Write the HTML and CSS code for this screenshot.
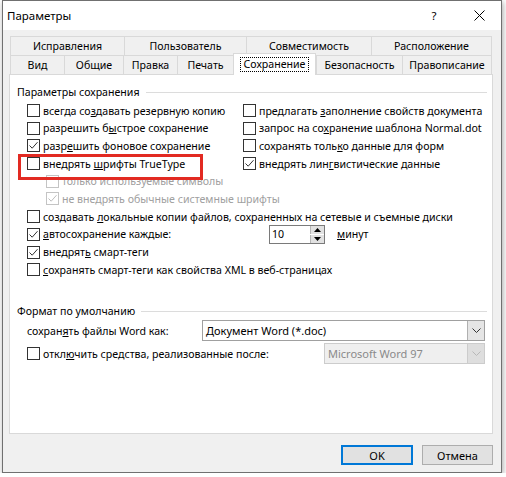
FILE: index.html
```html
<!DOCTYPE html>
<html lang="ru">
<head>
  <meta charset="UTF-8">
  <title>Параметры</title>
  <link rel="stylesheet" href="styles.css">
</head>
<body>
  <div class="dialog">
    <div class="titlebar">
      <span class="title">Параметры</span>
      <span class="help">?</span>
      <span class="close">
        <svg width="11" height="11" viewBox="0 0 11 11"><path d="M0.5 0.5 L10.5 10.5 M10.5 0.5 L0.5 10.5"/></svg>
      </span>
    </div>

    <div class="body">
      <div class="tabs">
        <div class="tab-row row-top">
          <div class="tab">Исправления</div>
          <div class="tab">Пользователь</div>
          <div class="tab">Совместимость</div>
          <div class="tab">Расположение</div>
        </div>
        <div class="tab-row row-bottom">
          <div class="tab">Вид</div>
          <div class="tab">Общие</div>
          <div class="tab">Правка</div>
          <div class="tab">Печать</div>
          <div class="tab active"><span class="focus">Сохранение</span></div>
          <div class="tab">Безопасность</div>
          <div class="tab">Правописание</div>
        </div>
      </div>

      <div class="panel">
        <div class="group">
          <div class="group-title"><span>Параметры сохранения</span></div>

          <div class="two-col">
            <label class="check"><span class="box"></span><span>всегда со<u>з</u>давать резервную копию</span></label>
            <label class="check"><span class="box"></span><span>предлагать <u>з</u>аполнение свойств документа</span></label>
            <label class="check"><span class="box"></span><span>разрешить б<u>ы</u>строе сохранение</span></label>
            <label class="check"><span class="box"></span><span>запрос на со<u>х</u>ранение шаблона Normal.dot</span></label>
            <label class="check"><span class="box"><svg viewBox="0 0 11 11"><path d="M1.5 5.5 L4.2 8.2 L9.5 2.2"/></svg></span><span>разр<u>е</u>шить фоновое сохранение</span></label>
            <label class="check"><span class="box"></span><span>сохранять толь<u>к</u>о данные для форм</span></label>
            <label class="check marked"><span class="box"></span><span>внедрять <u>ш</u>рифты TrueType</span></label>
            <label class="check"><span class="box"><svg viewBox="0 0 11 11"><path d="M1.5 5.5 L4.2 8.2 L9.5 2.2"/></svg></span><span>внедрять лин<u>г</u>вистические данные</span></label>
          </div>

          <label class="check sub off"><span class="box"></span><span>только используемые символы</span></label>
          <label class="check sub off"><span class="box"><svg viewBox="0 0 11 11"><path d="M1.5 5.5 L4.2 8.2 L9.5 2.2"/></svg></span><span>не внедрять обычные системные шрифты</span></label>
          <label class="check"><span class="box"></span><span>создавать <u>л</u>окальные копии файлов, сохраненных на сетевые и съемные диски</span></label>

          <div class="autosave">
            <label class="check"><span class="box"><svg viewBox="0 0 11 11"><path d="M1.5 5.5 L4.2 8.2 L9.5 2.2"/></svg></span><span><u>а</u>втосохранение каждые:</span></label>
            <div class="spin">
              <span class="spin-value">10</span>
              <span class="spin-btns">
                <span class="spin-btn"><svg width="7" height="4" viewBox="0 0 7 4"><path d="M3.5 0 L7 4 L0 4 Z"/></svg></span>
                <span class="spin-btn"><svg width="7" height="4" viewBox="0 0 7 4"><path d="M0 0 L7 0 L3.5 4 Z"/></svg></span>
              </span>
            </div>
            <span class="unit"><u>м</u>инут</span>
          </div>

          <label class="check"><span class="box"><svg viewBox="0 0 11 11"><path d="M1.5 5.5 L4.2 8.2 L9.5 2.2"/></svg></span><span>внедрят<u>ь</u> смарт-теги</span></label>
          <label class="check"><span class="box"></span><span><u>с</u>охранять смарт-теги как свойства XML в веб-страницах</span></label>
        </div>

        <div class="group format">
          <div class="group-title"><span>Формат по умолчанию</span></div>
          <div class="field-row">
            <span class="field-label">сохран<u>я</u>ть файлы Word как:</span>
            <div class="combo wide">
              <span class="combo-text">Документ Word (*.doc)</span>
              <span class="combo-arrow"><svg width="9" height="5" viewBox="0 0 9 5"><path d="M0.5 0.5 L4.5 4.5 L8.5 0.5"/></svg></span>
            </div>
          </div>
          <div class="field-row">
            <label class="check"><span class="box"></span><span>откл<u>ю</u>чить средства, реализованные после:</span></label>
            <div class="combo narrow disabled">
              <span class="combo-text">Microsoft Word 97</span>
              <span class="combo-arrow"><svg width="9" height="5" viewBox="0 0 9 5"><path d="M0.5 0.5 L4.5 4.5 L8.5 0.5"/></svg></span>
            </div>
          </div>
        </div>
      </div>

      <div class="buttons">
        <button class="btn default">OK</button>
        <button class="btn">Отмена</button>
      </div>
    </div>
  </div>
</body>
</html>
```

FILE: styles.css
```css
* { box-sizing: border-box; }

body {
  margin: 0;
  padding: 0 4px 0 2px;
  background: #ffffff;
  font-family: "Noto Sans", sans-serif;
  font-size: 10.6px;
  color: #000;
}

.dialog {
  width: 500px;
  height: 473px;
  border: 1px solid #707070;
  background: #f0f0f0;
  box-shadow: 1px 2px 6px rgba(0,0,0,0.35);
  display: flex;
  flex-direction: column;
}

/* title bar */
.titlebar {
  height: 29px;
  flex: none;
  background: #fff;
  display: flex;
  align-items: center;
  padding-left: 4px;
  font-size: 11.5px;
}
.title { flex: 1; }
.help { width: 20px; text-align: center; margin-right: 20px; }
.close {
  width: 30px; margin-right: 7px;
  display: flex; justify-content: center;
}
.close svg { stroke: #000; stroke-width: 1; fill: none; }

.body {
  flex: 1;
  padding: 6px 8px 7px 6px;
  display: flex;
  flex-direction: column;
}

/* tabs */
.tabs { margin-left: 1px; }
.tab-row {
  display: grid;
  height: 19px;
}
.row-top { grid-template-columns: 114px 122px 125px 121px; }
.row-bottom { grid-template-columns: 54px 59px 54px 56px 83px 86px 90px; }
.tab {
  border-left: 1px solid #d9d9d9;
  border-top: 1px solid #d9d9d9;
  display: flex; align-items: center; justify-content: center;
  white-space: nowrap;
  padding-bottom: 1px;
}
.tab:last-child { border-right: 1px solid #d9d9d9; }
.tab.active {
  background: #fff;
  border-right: 1px solid #d9d9d9;
  margin-top: -2px;
  margin-bottom: -1px;
  position: relative;
  z-index: 1;
  padding-bottom: 0;
}
.focus {
  border: 1px dotted #000;
  padding: 0 3px;
  line-height: 13px;
}

/* panel */
.panel {
  height: 360px;
  flex: none;
  background: #fff;
  border: 1px solid #d9d9d9;
  padding: 9px 5px 0 7px;
}
.group-title {
  display: flex;
  align-items: center;
  line-height: 17.7px;
}
.group-title::after {
  content: "";
  flex: 1;
  border-top: 1px solid #dcdcdc;
  margin-left: 6px;
}

.check {
  display: flex;
  align-items: center;
  height: 17.7px;
  padding-left: 10px;
  white-space: nowrap;
}
.box {
  width: 13px; height: 13px;
  flex: none;
  border: 1px solid #333;
  background: #fff;
  margin-right: 3px;
  display: flex;
}
.box svg { width: 11px; height: 11px; fill: none; stroke: #333; stroke-width: 1; }
.check.sub { padding-left: 29px; }
.check.off { color: #a0a0a0; }
.check.off .box { border-color: #c4c4c4; }
.check.off .box svg { stroke: #bdbdbd; }

.two-col {
  display: grid;
  grid-template-columns: 216px auto;
}
.marked { position: relative; }
.marked::before {
  content: "";
  position: absolute;
  left: 1px; top: -1px;
  width: 179px; height: 20px;
  border: 3px solid #e22a22;
}

.autosave {
  display: flex;
  align-items: center;
  height: 17.7px;
}
.autosave .check { width: 252px; }
.spin {
  display: flex;
  height: 19px;
  width: 56px;
  border: 1px solid #7a7a7a;
  background: #fff;
}
.spin-value { flex: 1; padding-left: 2px; line-height: 17px; }
.spin-btns { width: 14px; display: flex; flex-direction: column; gap: 1px; }
.spin-btn {
  flex: 1;
  background: #e1e1e1;
  border-left: 1px solid #b5b5b5;
  display: flex; align-items: center; justify-content: center;
}
.spin-btn svg { fill: #000; }
.unit { margin-left: 12px; }

/* default format */
.format { margin-top: 24px; }
.field-row {
  display: flex;
  align-items: center;
  justify-content: space-between;
  height: 21px;
  margin-right: 2px;
  margin-bottom: 2px;
}
.field-label { padding-left: 10px; }
.combo {
  height: 21px;
  display: flex;
  border: 1px solid #a0a0a0;
  background: #fff;
}
.combo.wide { width: 283px; }
.combo.narrow { width: 161px; }
.combo-text { flex: 1; padding-left: 3px; line-height: 19px; font-size: 11px; }
.combo-arrow {
  width: 17px;
  background: #e5e5e5;
  border-left: 1px solid #b0b0b0;
  display: flex; align-items: center; justify-content: center;
}
.combo-arrow svg { fill: none; stroke: #333; stroke-width: 1; }
.combo.disabled { background: #efefef; border-color: #cccccc; color: #8a8a8a; }
.combo.disabled .combo-arrow { background: #dedede; border-left-color: #cccccc; }
.combo.disabled .combo-arrow svg { stroke: #b8b8b8; }

/* buttons */
.buttons {
  margin-top: 11px;
  display: flex;
  justify-content: flex-end;
  gap: 9px;
}
.btn {
  width: 71px; height: 20px;
  font-family: inherit;
  font-size: 11px;
  background: #e1e1e1;
  border: 1px solid #adadad;
  padding: 0;
  color: #000;
}
.btn.default { width: 72px; border: 2px solid #0078d7; }
```
